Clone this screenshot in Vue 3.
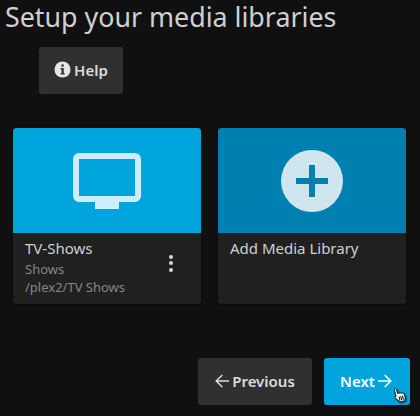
<script setup>
const library = { name: 'TV-Shows', type: 'Shows', path: '/plex2/TV Shows' }
</script>

<template>
  <main class="page">
    <h1 class="title">Setup your media libraries</h1>
    <div class="help-row">
      <button class="btn help">
        <svg class="info" viewBox="0 0 18 18">
          <circle cx="9" cy="9" r="8.5" fill="#e6e6e6" />
          <rect x="7.8" y="3.4" width="2.6" height="2.6" rx="1.3" fill="#303030" />
          <path d="M6.900 7.400h3.400v5.500h1v1.300H6.900v-1.300h1V8.700h-1z" fill="#303030" />
        </svg>
        <span>Help</span>
      </button>
    </div>
    <section class="cards">
      <article class="card">
        <div class="art art-blue">
          <svg class="tv" viewBox="0 0 68 56">
            <path fill-rule="evenodd" fill="#cdeefe" d="M6 0h56a6 6 0 0 1 6 6v37a6 6 0 0 1-6 6H46v7H22v-7H6a6 6 0 0 1-6-6V6a6 6 0 0 1 6-6zM6 6v37h56V6z" />
          </svg>
        </div>
        <div class="info-block">
          <div class="text">
            <div class="name">{{ library.name }}</div>
            <div class="sub">{{ library.type }}</div>
            <div class="sub">{{ library.path }}</div>
          </div>
          <div class="dots"><i></i><i></i><i></i></div>
        </div>
      </article>
      <article class="card">
        <div class="art art-dark">
          <div class="plus-circle">
            <svg viewBox="0 0 32 32" class="plus"><path fill="#0080b0" d="M13 0h6v13h13v6H19v13h-6V19H0v-6h13z" /></svg>
          </div>
        </div>
        <div class="info-block">
          <div class="name">Add Media Library</div>
        </div>
      </article>
    </section>
    <footer class="actions">
      <button class="btn prev">
        <svg class="arrow" viewBox="0 0 14 14"><path d="M14 7H1.200M7.300 1 1.200 7l6.100 6" fill="none" stroke="currentColor" stroke-width="1.500" /></svg>
        <span>Previous</span>
      </button>
      <button class="btn next">
        <span>Next</span>
        <svg class="arrow" viewBox="0 0 14 14"><path d="M0 7h12.800M6.700 1l6.100 6-6.100 6" fill="none" stroke="currentColor" stroke-width="1.500" /></svg>
      </button>
    </footer>
    <svg class="cursor" viewBox="0 0 16 18">
      <g transform="rotate(-14 8 9)">
        <path d="M4 .8c1 0 1.700.7 1.700 1.700v4.300l1.100-.3 1.200.3 1.200.1 1.200.3 1.100.5c1 .5 1.500 1.200 1.500 2.200v3.300c0 1-.5 1.700-1 2.500v1H5.500v-1c-1-1.500-2.700-3.500-3.700-5-.6-1 .5-2 1.500-1.200l-.1-7c0-.6.300-1.500.8-1.700z" fill="#fff" stroke="#111" stroke-width="1" />
        <path d="M6.500 10.500v4.700M8.500 10.500v4.700M10.500 10.500v4.700" stroke="#111" stroke-width="1.200" />
      </g>
    </svg>
  </main>
</template>

<style>
body { background: #101010; }
</style>

<style scoped>
.page {
  position: relative;
  width: 420px;
  height: 416px;
  background: #101010;
  font-family: "Noto Sans", "Open Sans", sans-serif;
  color: #d6d6d6;
}
.title {
  margin: 0;
  padding: 2px 0 0 5px;
  height: 45px;
  font-size: 26.8px;
  line-height: 29px;
  font-weight: 400;
  white-space: nowrap;
  color: #d0d0d0;
}
.help-row {
  padding-left: 39px;
}
.btn {
  display: flex;
  align-items: center;
  justify-content: center;
  gap: 3px;
  height: 47px;
  border: 0;
  border-radius: 3px;
  padding: 0 0 2px;
  font-family: inherit;
  font-size: 15px;
  font-weight: 600;
  background: #303030;
  color: #dcdcdc;
}
.help { width: 84px; }
.info { width: 17px; height: 17px; }
.cards {
  display: flex;
  gap: 17px;
  margin-top: 34px;
  padding-left: 13px;
}
.card {
  width: 188px;
  height: 176px;
  border-radius: 3px;
  background: #202020;
  box-shadow: 0 0 3px rgba(0, 0, 0, 0.6);
  overflow: hidden;
}
.art {
  height: 105px;
  display: flex;
  align-items: center;
  justify-content: center;
  border-radius: 3px 3px 0 0;
}
.art-blue { background: #00a4dc; }
.art-dark { background: #0080b0; }
.tv { width: 68px; height: 56px; }
.plus-circle {
  width: 62px;
  height: 62px;
  border-radius: 50%;
  background: #d0e6ef;
  display: flex;
  align-items: center;
  justify-content: center;
}
.plus { width: 32px; height: 32px; }
.info-block {
  display: flex;
  justify-content: space-between;
  padding: 0 12px;
}
.name {
  margin-top: 5px;
  font-size: 15px;
  line-height: 20px;
  color: #d0d0d0;
}
.sub {
  font-size: 13px;
  line-height: 18px;
  color: #858585;
}
.text .name { margin-bottom: 2px; }
.dots {
  display: flex;
  flex-direction: column;
  gap: 2.4px;
  margin: 22px 16px 0 0;
}
.dots i {
  width: 4px;
  height: 4px;
  border-radius: 50%;
  background: #d6d6d6;
}
.actions {
  display: flex;
  justify-content: flex-end;
  gap: 12px;
  margin-top: 54px;
  padding-right: 10px;
}
.prev { width: 114px; }
.next { width: 86px; background: #00a4dc; color: #fff; padding-right: 2px; }
.arrow { width: 14px; height: 14px; }
.cursor {
  position: absolute;
  left: 393px;
  top: 387px;
  width: 14px;
  height: 16px;
  filter: drop-shadow(1px 1px 1px rgba(0, 0, 0, 0.6));
}
</style>
